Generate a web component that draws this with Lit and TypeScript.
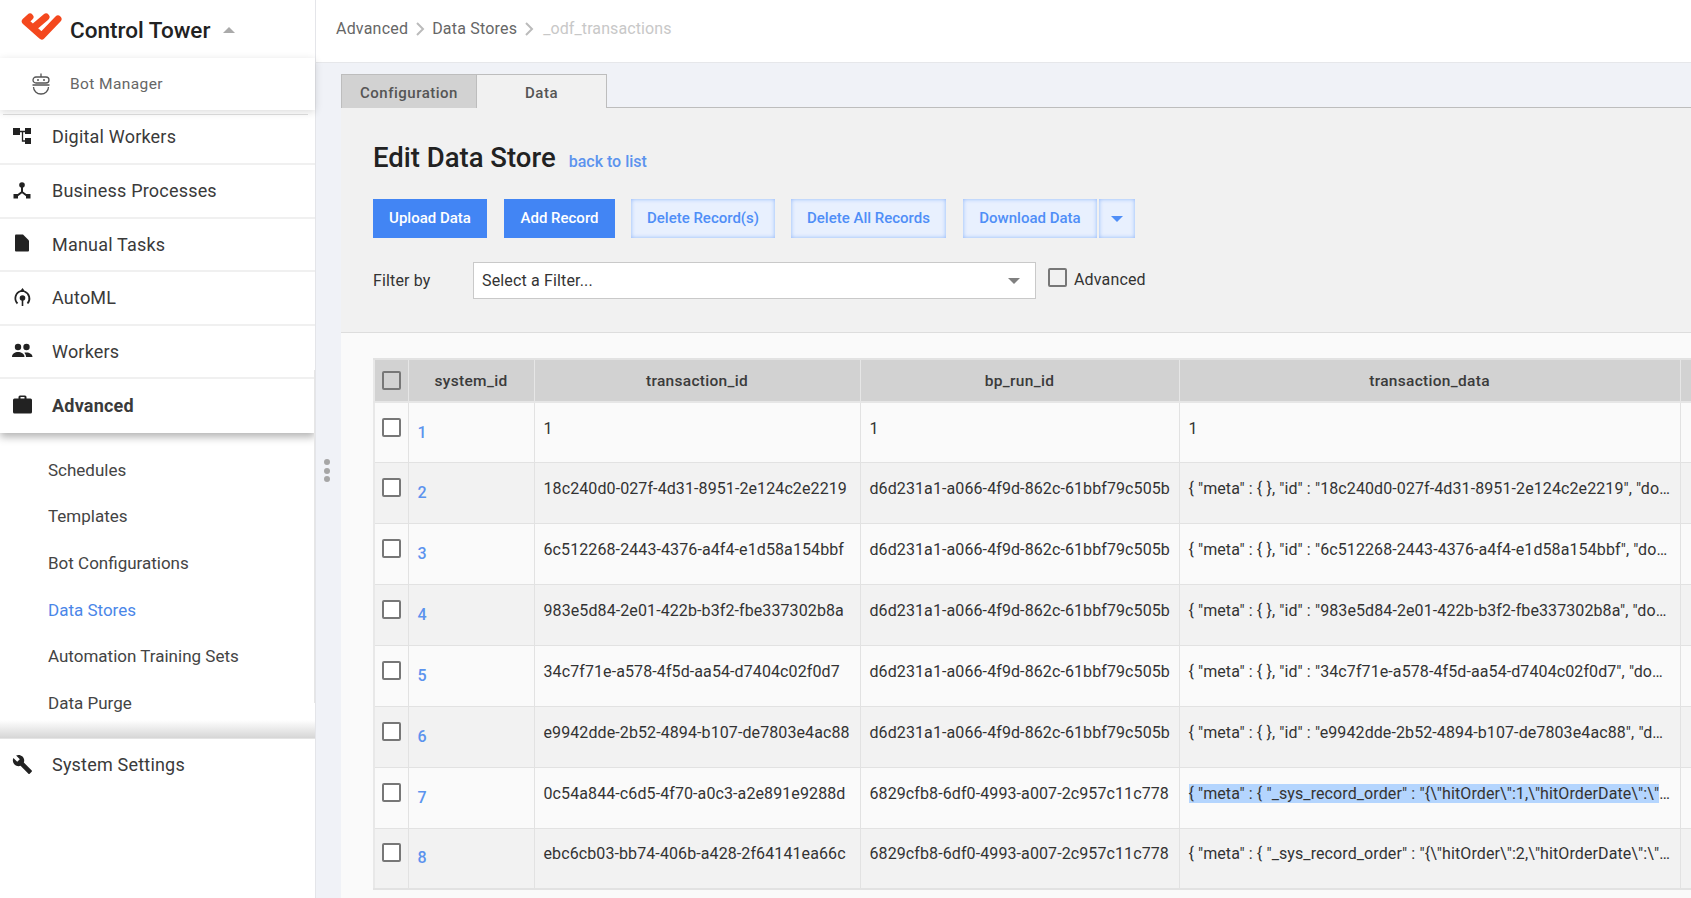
import { LitElement, html, css, svg } from 'lit'
import { customElement } from 'lit/decorators.js'

const icons: Record<string, unknown> = {
  workers: svg`<path d="M1 1h7v7H1zM13 1h6v6h-6zM13 11h6v6h-6z"/><path d="M8 4.500h5M10.500 4.500V14H13" fill="none" stroke="currentColor" stroke-width="1.300"/>`,
  process: svg`<circle cx="10" cy="4" r="2.800"/><path d="M1.500 13h4.500v4.500H1.500zM14 13h4.500v4.500H14z"/><path d="M10 4v7L4 15.500M10 11l6 4.500" fill="none" stroke="currentColor" stroke-width="2"/>`,
  file: svg`<path d="M4 .5h7l6 6v10a1 1 0 0 1-1 1H4a1 1 0 0 1-1-1v-15a1 1 0 0 1 1-1z"/>`,
  automl: svg`<circle cx="10.500" cy="10" r="2.800"/><path d="M10.500 12v6" stroke="currentColor" stroke-width="1.600"/><path d="M5.500 15.500A7.500 7.500 0 0 1 9 3M15.500 15.500A7.500 7.500 0 0 0 12.500 3.500" fill="none" stroke="currentColor" stroke-width="1.800"/><path d="M10.500 0l3 4h-6z"/>`,
  people: svg`<circle cx="6" cy="5" r="3.200"/><circle cx="14.500" cy="5" r="3.200"/><path d="M0 15c0-3.500 3-5 6-5s6.500 1.500 6.500 5zM14 15c0-1.500-.5-3-1.700-4.200.6-.2 1.500-.3 2.200-.3 3 0 6 1.500 6 4.500z"/>`,
  case: svg`<path d="M6.500 3.500V2A1.500 1.500 0 0 1 8 .5h5A1.500 1.500 0 0 1 14.500 2v1.500h4A1.500 1.500 0 0 1 20 5v12a1.500 1.500 0 0 1-1.500 1.500h-16A1.500 1.500 0 0 1 1 17V5a1.500 1.500 0 0 1 1.500-1.500zm2 0h4V2h-4z" fill-rule="evenodd"/>`,
  wrench: svg`<path transform="scale(.87)" d="M22.700 19l-9.100-9.100c.9-2.300.4-5-1.500-6.900-2-2-5-2.400-7.400-1.300L9 6 6 9 1.600 4.700C.4 7.100.9 10.100 2.900 12.100c1.900 1.900 4.600 2.400 6.900 1.500l9.100 9.100c.4.400 1 .4 1.400 0l2.300-2.300c.5-.4.5-1.100.1-1.400z"/>`,
}

const navItems = [
  { label: 'Digital Workers', icon: 'workers' },
  { label: 'Business Processes', icon: 'process' },
  { label: 'Manual Tasks', icon: 'file' },
  { label: 'AutoML', icon: 'automl' },
  { label: 'Workers', icon: 'people' },
]

const subItems = ['Schedules', 'Templates', 'Bot Configurations', 'Data Stores', 'Automation Training Sets', 'Data Purge']

const run1 = 'd6d231a1-a066-4f9d-862c-61bbf79c505b'
const run2 = '6829cfb8-6df0-4993-a007-2c957c11c778'

const rows = [
  { id: 1, tx: '1', run: '1', data: '1' },
  { id: 2, tx: '18c240d0-027f-4d31-8951-2e124c2e2219', run: run1, data: '{ "meta" : { }, "id" : "18c240d0-027f-4d31-8951-2e124c2e2219", "do…' },
  { id: 3, tx: '6c512268-2443-4376-a4f4-e1d58a154bbf', run: run1, data: '{ "meta" : { }, "id" : "6c512268-2443-4376-a4f4-e1d58a154bbf", "do…' },
  { id: 4, tx: '983e5d84-2e01-422b-b3f2-fbe337302b8a', run: run1, data: '{ "meta" : { }, "id" : "983e5d84-2e01-422b-b3f2-fbe337302b8a", "do…' },
  { id: 5, tx: '34c7f71e-a578-4f5d-aa54-d7404c02f0d7', run: run1, data: '{ "meta" : { }, "id" : "34c7f71e-a578-4f5d-aa54-d7404c02f0d7", "do…' },
  { id: 6, tx: 'e9942dde-2b52-4894-b107-de7803e4ac88', run: run1, data: '{ "meta" : { }, "id" : "e9942dde-2b52-4894-b107-de7803e4ac88", "d…' },
  { id: 7, tx: '0c54a844-c6d5-4f70-a0c3-a2e891e9288d', run: run2, data: '…', selected: '{ "meta" : { "_sys_record_order" : "{\\"hitOrder\\":1,\\"hitOrderDate\\":\\"' },
  { id: 8, tx: 'ebc6cb03-bb74-406b-a428-2f64141ea66c', run: run2, data: '{ "meta" : { "_sys_record_order" : "{\\"hitOrder\\":2,\\"hitOrderDate\\":\\"…' },
]

@customElement('app-root')
export class AppRoot extends LitElement {
  static styles = css`
    :host {
      display: flex;
      height: 100vh;
      overflow: hidden;
      font-family: Roboto, sans-serif;
      color: #333;
      background: #f0f2f7;
    }

    /* sidebar */
    .sidebar {
      position: relative;
      flex: none;
      width: 315px;
      background: #fff;
      border-right: 1px solid #e4e5e9;
    }
    .brand {
      display: flex;
      align-items: center;
      box-sizing: border-box;
      height: 58px;
      padding: 2px 0 0 21px;
      font-size: 22.500px;
      font-weight: 500;
      color: #222;
    }
    .brand svg {
      width: 41px;
      height: 28px;
      margin-right: 8px;
      margin-top: -6px;
    }
    .brand .up {
      width: 0;
      height: 0;
      margin-left: 13px;
      border: 6px solid transparent;
      border-top: 0;
      border-bottom: 6px solid #aaa;
    }
    .bot {
      position: relative;
      display: flex;
      align-items: center;
      height: 52px;
      padding-left: 31px;
      font-size: 15.500px;
      letter-spacing: 0.4px;
      color: #666;
      background: #fff;
      box-shadow: 0 2px 8px rgba(0, 0, 0, 0.14);
    }
    .bot svg {
      width: 20px;
      height: 22px;
      margin-right: 19px;
      fill: none;
      stroke: #555;
      stroke-width: 1.300;
    }
    .rule {
      height: 1px;
      margin: 4px 7px 5px 3px;
      background: #dfdfdf;
    }
    .nav-item {
      display: flex;
      align-items: center;
      box-sizing: border-box;
      height: 53.600px;
      padding-left: 12px;
      font-size: 18px;
      letter-spacing: 0.2px;
      border-bottom: 2px solid #f0f0f0;
      color: #3a3a3a;
    }
    .nav-item.first {
      height: 45px;
      padding-bottom: 10px;
    }
    .nav-item svg {
      flex: none;
      width: 21px;
      height: 20px;
      margin-right: 19px;
      fill: #222;
      color: #222;
    }
    .nav-item.active {
      position: relative;
      height: 54px;
      padding-bottom: 2px;
      font-weight: 700;
      border-bottom: 0;
      box-shadow: 0 4px 8px rgba(0, 0, 0, 0.3);
      clip-path: inset(0 0 -20px 0);
    }
    .nav-item.last {
      padding-bottom: 4px;
      border-bottom: 0;
    }
    .sub {
      display: flex;
      flex-direction: column;
      box-sizing: border-box;
      height: 306px;
      padding: 13.500px 0 0 48px;
      background: linear-gradient(to top, #d6d6d6, #fff 18px);
      border-bottom: 1px solid #e4e4e4;
    }
    .sub a {
      height: 46.600px;
      line-height: 46.600px;
      font-size: 17px;
      color: #444;
    }
    .sub a.current {
      color: #4a86e8;
    }
    .track {
      position: absolute;
      top: 370px;
      right: 0;
      width: 1px;
      height: 333px;
      background: #e6e6e6;
    }
    .handle {
      position: absolute;
      top: 459px;
      right: -15px;
      display: flex;
      flex-direction: column;
      gap: 2.500px;
    }
    .handle i {
      width: 6px;
      height: 6px;
      border-radius: 50%;
      background: #a6a6a6;
    }

    /* main column */
    .main {
      flex: 1;
      min-width: 0;
      display: flex;
      flex-direction: column;
    }
    .crumbs {
      flex: none;
      display: flex;
      align-items: center;
      gap: 7.500px;
      height: 63px;
      padding: 0 0 5px 20px;
      box-sizing: border-box;
      background: #fff;
      border-bottom: 1px solid #e6e7ea;
      font-size: 16px;
      letter-spacing: 0.2px;
      color: #666;
    }
    .crumbs svg {
      width: 9px;
      height: 14px;
      fill: none;
      stroke: #bbb;
      stroke-width: 2;
    }
    .crumbs .last {
      margin-left: 2px;
      letter-spacing: 0.1px;
      color: #c8c8c8;
    }
    .content {
      flex: 1;
      min-height: 0;
      margin: 11px 0 0 25px;
    }
    .tabs {
      display: flex;
      height: 33px;
      border-bottom: 1px solid #bdbdbd;
    }
    .tab {
      display: flex;
      align-items: center;
      justify-content: center;
      box-sizing: border-box;
      height: 34px;
      padding-top: 2px;
      font-size: 15px;
      font-weight: 500;
      letter-spacing: 0.5px;
      color: #555;
      border: 1px solid #bdbdbd;
      border-bottom: 0;
    }
    .tab.config {
      width: 136px;
      background: #d2d2d2;
    }
    .tab.data {
      width: 130px;
      border-left: 0;
      background: #f1f1f1;
    }
    .panel {
      box-sizing: border-box;
      height: 225px;
      padding: 33px 32px 0;
      background: #f1f1f1;
      border-bottom: 1px solid #ddd;
    }
    .title {
      display: flex;
      align-items: baseline;
      gap: 13px;
      height: 58px;
    }
    .title h1 {
      margin: 0;
      font-size: 27.500px;
      font-weight: 500;
      color: #222;
    }
    .title a {
      font-size: 16px;
      font-weight: 500;
      color: #5c93ee;
    }
    .actions {
      display: flex;
      gap: 16px;
    }
    .btn {
      display: flex;
      align-items: center;
      justify-content: center;
      box-sizing: border-box;
      height: 39px;
      padding-bottom: 2px;
      font-size: 15px;
      font-weight: 500;
      color: #4f8ef7;
      background: #e8f0fe;
      box-shadow: inset 0 0 4px #8db6fb;
    }
    .btn.solid {
      color: #fff;
      background: #4285f4;
      box-shadow: none;
    }
    .btn.upload { width: 114px; margin-right: 1px; }
    .btn.add { width: 111px; }
    .btn.del { width: 144px; }
    .btn.del-all { width: 155px; margin-right: 1px; }
    .btn.download { width: 134px; }
    .btn.more { width: 36px; padding-bottom: 0; }
    .split {
      display: flex;
      gap: 2px;
    }
    .filter {
      display: flex;
      align-items: center;
      height: 37px;
      margin-top: 24px;
      font-size: 16px;
      letter-spacing: 0.15px;
      color: #333;
    }
    .filter label {
      width: 100px;
    }
    .select {
      display: flex;
      align-items: center;
      justify-content: space-between;
      box-sizing: border-box;
      width: 563px;
      height: 37px;
      padding: 0 15px 0 8px;
      background: #fff;
      border: 1px solid #c9c9c9;
    }
    .caret {
      width: 0;
      height: 0;
      border: 6px solid transparent;
      border-bottom: 0;
      border-top: 6px solid #808080;
    }
    .caret.blue {
      border-top-color: #4f8ef7;
    }
    .check {
      display: inline-block;
      box-sizing: border-box;
      width: 19px;
      height: 19px;
      border: 2px solid #777;
      border-radius: 2px;
      background: #fff;
    }
    th .check,
    .filter .check {
      background: transparent;
    }
    .filter .check {
      margin: -6px 7px 0 12px;
    }
    .filter .adv {
      margin-top: -2px;
    }

    /* table */
    .table-wrap {
      height: 566px;
      padding: 25px 0 0 32px;
      box-sizing: border-box;
      background: #fafafa;
      overflow: hidden;
    }
    table {
      table-layout: fixed;
      width: 1400px;
      border-collapse: collapse;
      font-size: 16px;
      letter-spacing: 0.1px;
      color: #333;
      border-top: 2px solid #e2e2e2;
      border-left: 2px solid #e8e8e8;
      border-bottom: 2px solid #e2e2e2;
    }
    col.c-pick { width: 34px; }
    col.c-id { width: 126px; }
    col.c-tx { width: 326px; }
    col.c-run { width: 319px; }
    col.c-data { width: 501px; }
    th {
      height: 41px;
      padding: 0;
      font-size: 15.500px;
      font-weight: 500;
      letter-spacing: 0.3px;
      color: #3b3b3b;
      background: #d2d2d2;
      border-right: 1px solid #e6e6e6;
      border-bottom: 2px solid #e6e6e6;
    }
    td {
      height: 60.900px;
      padding: 0 9px 9px;
      box-sizing: border-box;
      border-right: 1px solid #e2e2e2;
      border-bottom: 1px solid #e2e2e2;
      white-space: nowrap;
      overflow: hidden;
    }
    tr:nth-child(even) td {
      background: #f2f2f2;
    }
    td.pick {
      padding: 0 0 7px;
      text-align: center;
    }
    th .check {
      vertical-align: middle;
    }
    td.id {
      padding: 8px 0 9px 9px;
      font-weight: 500;
      color: #5c93ee;
    }
    .picked {
      background: #b4d5fe;
    }
  `

  render() {
    return html`
      <aside class="sidebar">
        <div class="brand">
          <svg viewBox="21 13 41 28">
            <path d="M30 17l-4.700 4.300L41.700 36 58 19M33 28l13-11" fill="none" stroke="#f4481e" stroke-width="7" stroke-linecap="round" stroke-linejoin="round"/>
          </svg>
          Control Tower
          <span class="up"></span>
        </div>
        <div class="bot">
          <svg viewBox="0 0 20 22">
            <path d="M10 .5V4M5 4h10a3 3 0 0 1 0 6H5a3 3 0 0 1 0-6zM6 7h2M12 7h2M1.500 12h17M2.500 14a7.500 7 0 0 0 15 0"/>
          </svg>
          Bot Manager
        </div>
        <div class="rule"></div>
        ${navItems.map(
          (item, i) => html`<div class="nav-item ${i === 0 ? 'first' : ''}">
            <svg viewBox="0 0 21 20">${icons[item.icon]}</svg>${item.label}
          </div>`
        )}
        <div class="nav-item active"><svg viewBox="0 0 21 20">${icons.case}</svg>Advanced</div>
        <div class="sub">
          ${subItems.map((s) => html`<a class=${s === 'Data Stores' ? 'current' : ''}>${s}</a>`)}
        </div>
        <div class="nav-item last"><svg viewBox="0 0 21 20">${icons.wrench}</svg>System Settings</div>
        <div class="track"></div>
        <div class="handle"><i></i><i></i><i></i></div>
      </aside>
      <div class="main">
        <nav class="crumbs">
          <span>Advanced</span>
          <svg viewBox="0 0 9 14"><path d="M1 1l6 6-6 6"/></svg>
          <span>Data Stores</span>
          <svg viewBox="0 0 9 14"><path d="M1 1l6 6-6 6"/></svg>
          <span class="last">_odf_transactions</span>
        </nav>
        <div class="content">
          <div class="tabs">
            <div class="tab config">Configuration</div>
            <div class="tab data">Data</div>
          </div>
          <section class="panel">
            <div class="title">
              <h1>Edit Data Store</h1>
              <a>back to list</a>
            </div>
            <div class="actions">
              <div class="btn solid upload">Upload Data</div>
              <div class="btn solid add">Add Record</div>
              <div class="btn del">Delete Record(s)</div>
              <div class="btn del-all">Delete All Records</div>
              <div class="split">
                <div class="btn download">Download Data</div>
                <div class="btn more"><span class="caret blue"></span></div>
              </div>
            </div>
            <div class="filter">
              <label>Filter by</label>
              <div class="select">Select a Filter...<span class="caret"></span></div>
              <span class="check"></span><span class="adv">Advanced</span>
            </div>
          </section>
          <div class="table-wrap">
            <table>
              <colgroup>
                <col class="c-pick" />
                <col class="c-id" />
                <col class="c-tx" />
                <col class="c-run" />
                <col class="c-data" />
                <col />
              </colgroup>
              <thead>
                <tr>
                  <th><span class="check"></span></th>
                  <th>system_id</th>
                  <th>transaction_id</th>
                  <th>bp_run_id</th>
                  <th>transaction_data</th>
                  <th></th>
                </tr>
              </thead>
              <tbody>
                ${rows.map(
                  (r) => html`<tr>
                    <td class="pick"><span class="check"></span></td>
                    <td class="id">${r.id}</td>
                    <td>${r.tx}</td>
                    <td>${r.run}</td>
                    <td>${r.selected ? html`<span class="picked">${r.selected}</span>` : ''}${r.data}</td>
                    <td></td>
                  </tr>`
                )}
              </tbody>
            </table>
          </div>
        </div>
      </div>
    `
  }
}
